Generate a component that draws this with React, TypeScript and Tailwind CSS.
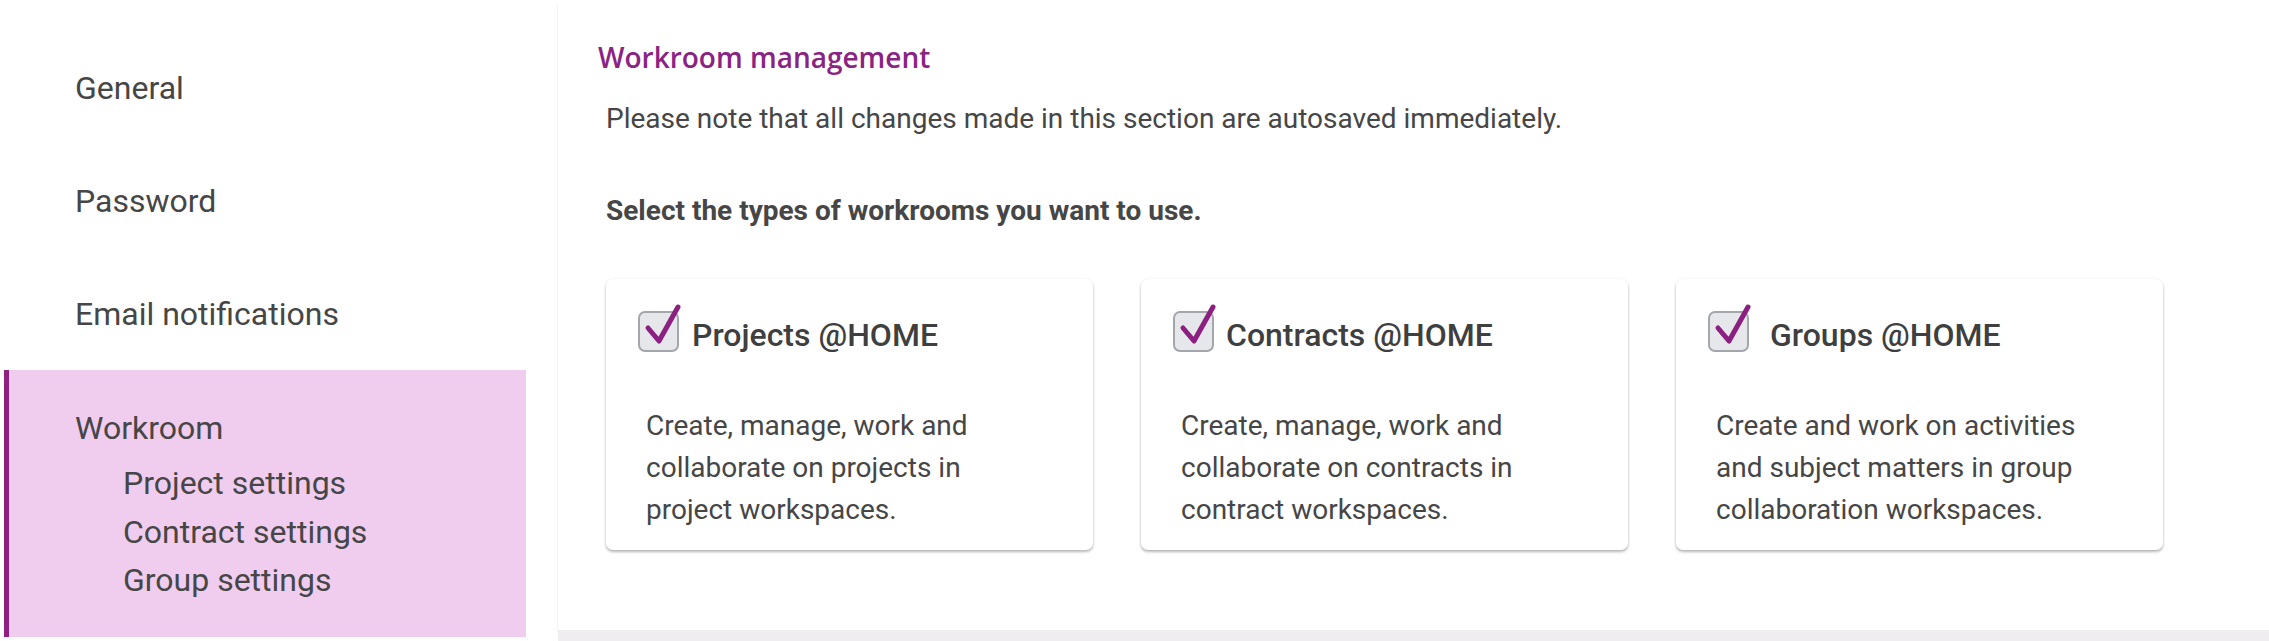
import React from "react";

const navItems = ["General", "Password", "Email notifications"];
const subItems = ["Project settings", "Contract settings", "Group settings"];

const cards = [
  {
    title: "Projects @HOME",
    text: "Create, manage, work and collaborate on projects in project workspaces.",
    gap: "ml-[13px]",
  },
  {
    title: "Contracts @HOME",
    text: "Create, manage, work and collaborate on contracts in contract workspaces.",
    gap: "ml-[12px]",
  },
  {
    title: "Groups @HOME",
    text: "Create and work on activities and subject matters in group collaboration workspaces.",
    gap: "ml-[21px]",
  },
];

const CheckBox = () => (
  <div className="relative w-[41px] h-[41px] shrink-0 rounded-[7px] border-2 border-[#a3a7ab] bg-[#e5e7ea]">
    {/* check mark sticks out over the top edge */}
    <svg
      className="absolute left-[-2px] top-[-9px] overflow-visible"
      width="46"
      height="48"
      viewBox="0 0 46 48"
    >
      <path
        d="M10 24 L21 37 L40 3"
        fill="none"
        stroke="#8c2080"
        strokeWidth="5"
        strokeLinecap="round"
        strokeLinejoin="round"
      />
    </svg>
  </div>
);

const App = () => {
  return (
    <div
      className="flex w-[2269px] h-[641px] bg-white text-[#464646] overflow-hidden"
      style={{ fontFamily: "Roboto, 'Liberation Sans', sans-serif" }}
    >
      {/* Sidebar */}
      <div className="w-[526px] shrink-0 pl-[4px] pt-[31px]">
        {navItems.map((item) => (
          <div key={item} className="h-[113px] flex items-center pl-[71px] text-[32px]">
            {item}
          </div>
        ))}
        <div className="h-[267px] bg-[#f0cdee] border-l-[5px] border-[#8e2182] pl-[66px] pt-[34px]">
          <div className="text-[32px] leading-[48px]">Workroom</div>
          <div className="mt-[7px] pl-[48px]">
            {subItems.map((s) => (
              <div key={s} className="text-[32px] leading-[48.5px]">
                {s}
              </div>
            ))}
          </div>
        </div>
      </div>

      {/* Main */}
      <div className="flex-1 ml-[32px] flex flex-col">
        <div className="h-[630px] bg-white shadow-[0_2px_2px_rgba(0,0,0,0.12)] pl-[40px] pt-[37px]">
          <h2
            className="text-[28px] leading-[40px] font-semibold text-[#8b2383]"
            style={{ fontFamily: "'Open Sans', sans-serif" }}
          >
            Workroom management
          </h2>
          <div className="pl-[8px]">
            <p className="mt-[22px] text-[28px] leading-[40px]">
              Please note that all changes made in this section are autosaved immediately.
            </p>
            <p className="mt-[52px] text-[28px] leading-[40px] font-bold">
              Select the types of workrooms you want to use.
            </p>
            <div className="mt-[48px] flex gap-[48px]">
              {cards.map((c) => (
                <div
                  key={c.title}
                  className="w-[487px] h-[271px] rounded-[7px] bg-white shadow-[0_2px_3px_rgba(0,0,0,0.28),0_0_2px_rgba(0,0,0,0.08)] pl-[32px] pt-[26px]"
                >
                  <div className="flex items-center">
                    <CheckBox />
                    <span className={`${c.gap} text-[32px] font-medium text-[#3f3f3f] leading-[44px] mt-[8px]`}>
                      {c.title}
                    </span>
                  </div>
                  <p className="mt-[48px] ml-[8px] w-[380px] text-[28px] leading-[42px]">
                    {c.text}
                  </p>
                </div>
              ))}
            </div>
          </div>
        </div>
        <div className="flex-1 bg-[#efedef]" />
      </div>
    </div>
  );
};

export default App;
